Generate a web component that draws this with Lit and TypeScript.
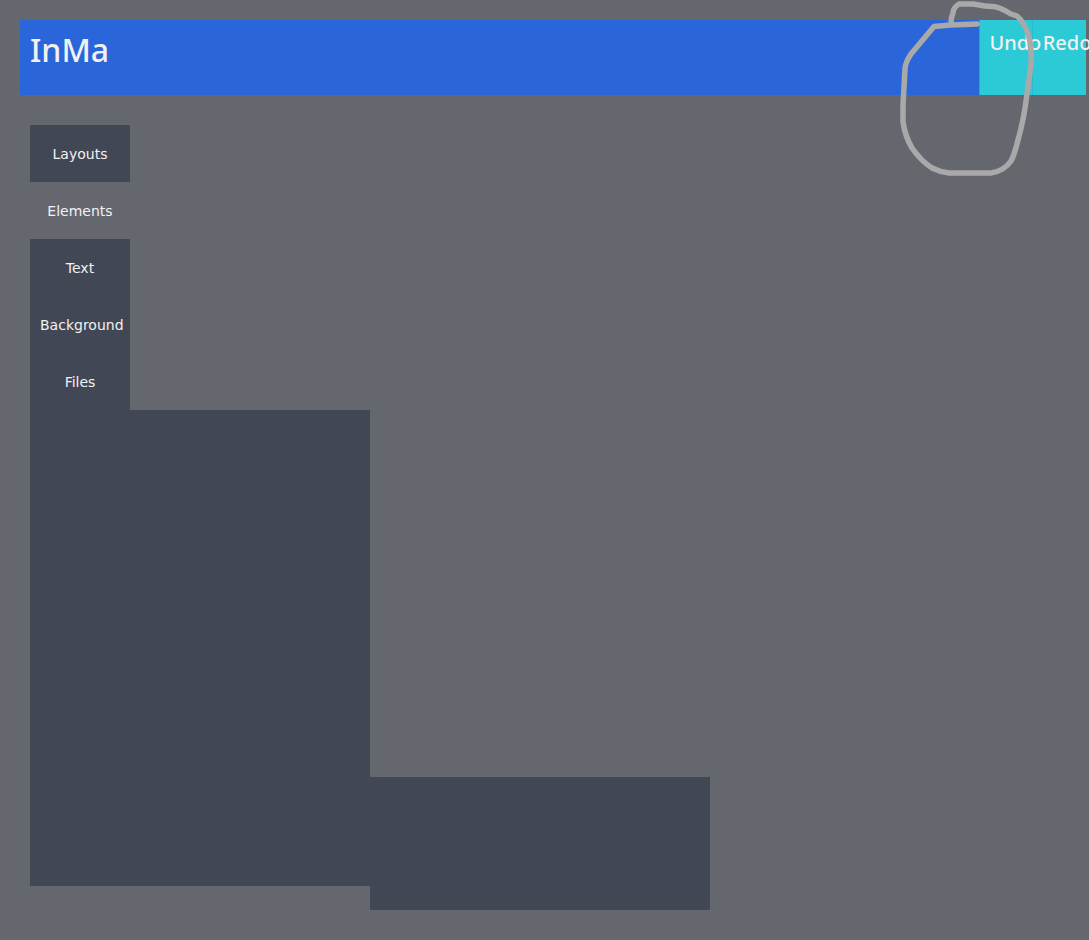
import { LitElement, html, css } from "lit";
import { customElement, state } from "lit/decorators.js";

@customElement("app-root")
export class AppRoot extends LitElement {
  @state() private active = "Elements";

  private sections = ["Layouts", "Elements", "Text", "Background", "Files"];

  static styles = css`
    :host {
      display: flex;
      flex-direction: column;
      position: relative;
      box-sizing: border-box;
      min-height: 100vh;
      padding: 20px 3px 30px 20px;
      overflow: hidden;
      background: #65676f;
      color: #f1f1f1;
      font-family: "Noto Sans", Verdana, sans-serif;
    }
    button {
      border: 0;
      padding: 10px;
      color: inherit;
      font-family: inherit;
      cursor: pointer;
    }
    .bar {
      display: grid;
      grid-template-columns: minmax(0, 18fr) minmax(0, 1fr) minmax(0, 1fr);
      height: 75px;
      background: #2a66d9;
    }
    .title {
      margin: 0;
      padding: 10px;
      font-size: 32px;
      line-height: 40px;
      font-weight: 500;
    }
    .action {
      display: flex;
      align-items: flex-start;
      justify-content: flex-start;
      background: #2bcad6;
      font-size: 20px;
      line-height: 26px;
      font-weight: 500;
    }
    .action.first {
      position: relative;
      z-index: 1;
      box-shadow: inset 1px 0 #2ba5c4, inset -1px 0 #2bbccb;
    }
    .menu {
      display: flex;
      flex-direction: column;
      width: 100px;
      margin: 30px 0 0 10px;
    }
    .item {
      height: 57px;
      background: #424755;
      font-family: "DejaVu Sans", Verdana, sans-serif;
      font-size: 14px;
      line-height: 20px;
      font-weight: 400;
      white-space: nowrap;
    }
    .item.active {
      background: transparent;
    }
    .panels {
      display: flex;
      flex: 1;
      min-height: 300px;
      margin-left: 10px;
    }
    .panel {
      width: 340px;
      margin-bottom: 24px;
      background: #424755;
    }
    .panel.low {
      align-self: flex-end;
      height: 133px;
      margin-bottom: 0;
    }
    .scribble {
      position: absolute;
      z-index: 2;
      top: 0;
      right: 50px;
      width: 145px;
      height: 180px;
      pointer-events: none;
    }
  `;

  render() {
    return html`
      <header class="bar">
        <h1 class="title">InMa</h1>
        <button class="action first" type="button">Undo</button>
        <button class="action" type="button">Redo</button>
      </header>
      <nav class="menu">
        ${this.sections.map(
          (name) => html`<button
            type="button"
            class="item ${name === this.active ? "active" : ""}"
            @click=${() => (this.active = name)}
          >${name}</button>`
        )}
      </nav>
      <main class="panels">
        <section class="panel"></section>
        <section class="panel low"></section>
      </main>
      <svg class="scribble" viewBox="894 0 145 180" fill="none" stroke="#a9a9a9"
        stroke-width="5.5" stroke-linecap="round" stroke-linejoin="round" aria-hidden="true">
        <path d="M977 24L951 25L934 26.500L911 54Q905 63 905 69L903 105L903 122Q905 136 912 148Q921 161 932 168Q940 172 949 173L991 173Q1004 171 1011 161Q1014 156 1018 140Q1024 119 1027 94L1031 64Q1032 45 1028 34Q1024 22 1017 16L1011 14Q998 6 992 6.500L985 6L973 4L959 4Q953 8 953 13Q951 17 951 23"/>
      </svg>
    `;
  }
}
